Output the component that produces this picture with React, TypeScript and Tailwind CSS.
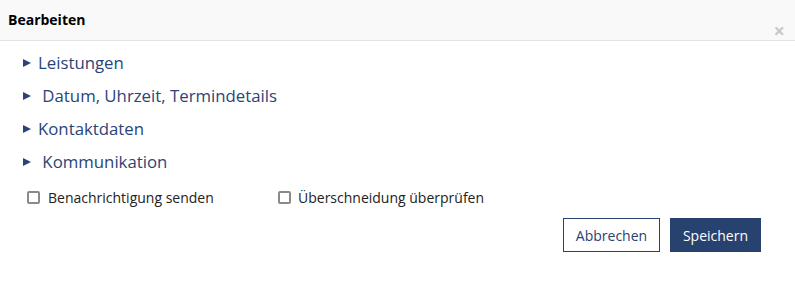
import React from 'react';

const sections = ['Leistungen', ' Datum, Uhrzeit, Termindetails', 'Kontaktdaten', ' Kommunikation'];

const App: React.FC = () => {
  return (
    <div className="w-[795px] h-[285px] bg-white font-['Open_Sans',sans-serif]">
      <div className="relative h-[41px] bg-[#f9f9f9] border-b border-[#e3e3e3]">
        <h3 className="absolute left-[8px] top-[10px] text-[14px] leading-[20px] font-bold text-black">Bearbeiten</h3>
        <button className="absolute right-[10px] top-[24px] text-[#c8c8c8] text-[20px] leading-[14px] font-bold">×</button>
      </div>

      <div className="pl-[23px] pt-[5px] flex flex-col">
        {sections.map((s, i) => (
          <div key={i} className="flex items-center h-[33px] text-[16.8px] text-[#2b4478]">
            <svg width="8" height="8" viewBox="0 0 8 8" className="mr-[7px] mt-[1px]">
              <path d="M0 0 L8 4 L0 8 Z" fill="#2b4478" />
            </svg>
            <span className="whitespace-pre">{s}</span>
          </div>
        ))}
      </div>

      <div className="flex items-center pl-[27px] mt-[7px] h-[24px] text-[14px] text-[#222]">
        <label className="flex items-center w-[251px]">
          <span className="w-[13px] h-[13px] border-2 border-[#8a8a8a] rounded-[2px] mr-[8px]" />
          Benachrichtigung senden
        </label>
        <label className="flex items-center">
          <span className="w-[13px] h-[13px] border-2 border-[#8a8a8a] rounded-[2px] mr-[7px]" />
          Überschneidung überprüfen
        </label>
      </div>

      <div className="flex justify-end gap-[10px] pr-[34px] mt-[9px]">
        <button className="w-[97px] h-[34px] border border-[#27426f] bg-white text-[#27426f] text-[14px]">Abbrechen</button>
        <button className="w-[91px] h-[34px] bg-[#27426f] text-white text-[14px]">Speichern</button>
      </div>
    </div>
  );
};

export default App;
